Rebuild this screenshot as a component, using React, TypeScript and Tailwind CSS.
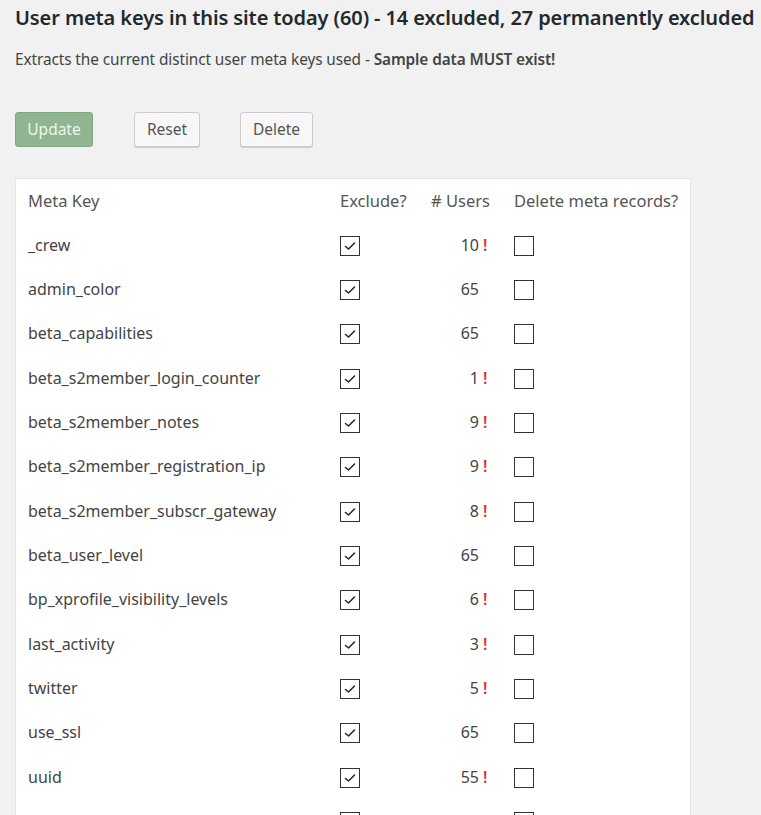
import React from "react";

const rows: { key: string; users: string; warn: boolean }[] = [
  { key: "_crew", users: "10", warn: true },
  { key: "admin_color", users: "65", warn: false },
  { key: "beta_capabilities", users: "65", warn: false },
  { key: "beta_s2member_login_counter", users: "1", warn: true },
  { key: "beta_s2member_notes", users: "9", warn: true },
  { key: "beta_s2member_registration_ip", users: "9", warn: true },
  { key: "beta_s2member_subscr_gateway", users: "8", warn: true },
  { key: "beta_user_level", users: "65", warn: false },
  { key: "bp_xprofile_visibility_levels", users: "6", warn: true },
  { key: "last_activity", users: "3", warn: true },
  { key: "twitter", users: "5", warn: true },
  { key: "use_ssl", users: "65", warn: false },
  { key: "uuid", users: "55", warn: true },
  { key: "", users: "", warn: false },
];

function Box({ checked }: { checked: boolean }) {
  return (
    <span className="flex h-[20px] w-[20px] items-center justify-center border border-[#333] bg-white">
      {checked && (
        <svg width="14" height="14" viewBox="0 0 14 14" fill="none">
          <path d="M2.5 7.5 L5.5 10 L11.5 4" stroke="#2a2a2a" strokeWidth="1.6" strokeLinecap="round" strokeLinejoin="round" />
        </svg>
      )}
    </span>
  );
}

export default function App() {
  return (
    <div className="h-[815px] overflow-hidden bg-[#f1f1f1] pl-[15px] font-['Noto_Sans',sans-serif] text-[#444]">
      <h1 className="pt-[5px] text-[20px] font-semibold leading-[26px] tracking-[-0.1px] text-[#23282d] whitespace-nowrap">
        User meta keys in this site today (60) - 14 excluded, 27 permanently excluded
      </h1>
      <p className="mt-[19px] text-[15.4px] leading-[20px] tracking-[-0.1px]">
        Extracts the current distinct user meta keys used - <b className="font-semibold">Sample data MUST exist!</b>
      </p>
      <div className="mt-[42px] flex items-start">
        <button className="h-[35px] w-[78px] rounded-[3px] border border-[#7fa881] bg-[#8fb592] text-[15.5px] text-[#eef7e8]">
          Update
        </button>
        <button className="ml-[41px] h-[35px] w-[66px] rounded-[3px] border border-[#cccccc] bg-[#f7f7f7] text-[15.5px] text-[#555] shadow-[0_1px_0_#cccccc]">
          Reset
        </button>
        <button className="ml-[40px] h-[35px] w-[73px] rounded-[3px] border border-[#cccccc] bg-[#f7f7f7] text-[15.5px] text-[#555] shadow-[0_1px_0_#cccccc]">
          Delete
        </button>
      </div>
      <div className="mt-[31px] w-[676px] border border-[#e5e5e5] bg-white pl-[12px]">
        <div className="grid h-[44px] grid-cols-[312px_91px_83px_1fr] items-center pt-[1px] text-[16.5px] text-[#555]">
          <span>Meta Key</span>
          <span>Exclude?</span>
          <span># Users</span>
          <span className="whitespace-nowrap">Delete meta records?</span>
        </div>
        {rows.map((r, i) => (
          <div key={i} className="grid h-[44.33px] grid-cols-[312px_91px_83px_1fr] items-center text-[16px]">
            <span className="-mt-[1px]">{r.key}</span>
            <span className="pt-[1px]"><Box checked /></span>
            <span className="-mt-[1px] flex">
              <span className="w-[48px] text-right">{r.users}</span>
              {r.warn && <span className="pl-[4px] font-semibold text-[#dc3232]">!</span>}
            </span>
            <span className="pt-[1px]"><Box checked={false} /></span>
          </div>
        ))}
      </div>
    </div>
  );
}
